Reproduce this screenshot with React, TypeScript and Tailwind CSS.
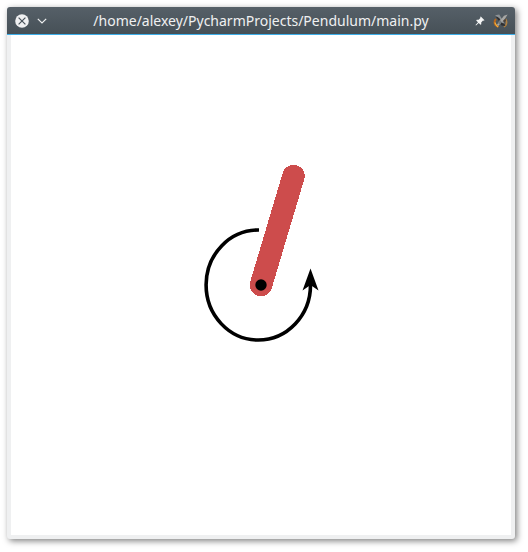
function CloseIcon() {
  return (
    <svg viewBox="0 0 14 14" className="size-3.5" aria-hidden="true">
      <circle cx="7" cy="7" r="6.8" fill="#eff0f1" />
      <path d="M3.6 3.6l6.8 6.8M10.4 3.6l-6.8 6.8" stroke="#4a535b" strokeWidth="1.2" />
    </svg>
  );
}

function ChevronIcon() {
  return (
    <svg viewBox="0 0 10 6" className="h-1.5 w-2.5" aria-hidden="true">
      <path d="M0.8 0.8L5 5L9.2 0.8" fill="none" stroke="#eff0f1" strokeWidth="1.2" />
    </svg>
  );
}

function PinIcon() {
  return (
    <svg viewBox="0 0 10 10" className="size-2.5" aria-hidden="true">
      <path
        d="M5.8 0.5L9.5 4.2L8.7 4.8L8 4.6L6.2 6.4L6.3 8.2L5.5 8.8L3.7 7L1 9.5L0.5 9L3 6.3L1.2 4.5L1.8 3.7L3.6 3.8L5.4 2L5.2 1.1Z"
        fill="#f4f5f5"
      />
    </svg>
  );
}

function AppIcon() {
  return (
    <svg viewBox="0 0 16 16" className="size-4" aria-hidden="true">
      <path d="M3 6Q0.5 9 2.5 12L5.5 14" fill="none" stroke="#b9681c" strokeWidth="2" />
      <path d="M1.8 9.5L3.5 12.5L5 14" fill="none" stroke="#f0b040" strokeWidth="1.2" />
      <path d="M12.5 6Q14.5 9 13 12L11 14" fill="none" stroke="#b08040" strokeWidth="1.6" />
      <path d="M3 4L6.5 4L9 7.5L12.5 13L8.5 12.5L6 8Z" fill="#2f2f30" />
      <path d="M9 8L12.5 5.5L13 8L10 10Z" fill="#4a4138" />
      <path d="M2 2.2L6.2 1.6L9 6L11.5 10.5L9.2 10L6.4 5.2L4.6 4Z" fill="#8d9295" />
      <path d="M14.6 1.4L11 2.8L8.4 6L4 11.5L5.2 13L9.6 8.2L12 5.8Z" fill="#a7a7a4" />
      <path d="M6.5 7L8.8 9L6.5 11.5L5 10Z" fill="#73797c" />
    </svg>
  );
}

function TitleBar() {
  return (
    <header className="flex h-7 items-center rounded-t-[3px] border-b border-[#3daee9] bg-linear-to-b from-[#566068] to-[#465057] px-2 text-[#eff0f1]">
      <div className="flex w-14 items-center gap-2">
        <button type="button" aria-label="Close">
          <CloseIcon />
        </button>
        <button type="button" aria-label="Minimize">
          <ChevronIcon />
        </button>
      </div>
      <h1 className="min-w-0 flex-1 truncate text-center font-['Noto_Sans','Open_Sans',sans-serif] text-sm leading-5">
        /home/alexey/PycharmProjects/Pendulum/main.py
      </h1>
      <div className="-mr-2 flex w-16 items-center justify-end gap-2 pr-1.5">
        <button type="button" aria-label="Keep on all desktops">
          <PinIcon />
        </button>
        <button type="button" aria-label="Window menu">
          <AppIcon />
        </button>
      </div>
    </header>
  );
}

function Pendulum() {
  return (
    <svg viewBox="0 0 500 500" className="block w-full bg-white" role="img" aria-label="Pendulum">
      <path
        d="M248 195A52.2 55 0 1 0 299.5 250"
        fill="none"
        stroke="#000"
        strokeWidth="3.6"
      />
      <path d="M299.5 233.5L307.5 255.5L299.5 250L291.5 255.5Z" fill="#000" />
      <path
        d="M250 250L282.5 141"
        stroke="#cd4c4c"
        strokeWidth="22.5"
        strokeLinecap="round"
        shapeRendering="crispEdges"
      />
      <circle cx="250" cy="250" r="5.7" fill="#000" />
    </svg>
  );
}

export default function App() {
  return (
    <div className="bg-white pt-[7px] pr-[13px] pb-[13px] pl-[7px]">
      <main className="rounded-[3px] bg-[#eff0f1] shadow-[2px_2px_6px_0px_rgba(0,0,0,0.5)]">
        <TitleBar />
        <div className="px-1 pb-1">
          <Pendulum />
        </div>
      </main>
    </div>
  );
}
